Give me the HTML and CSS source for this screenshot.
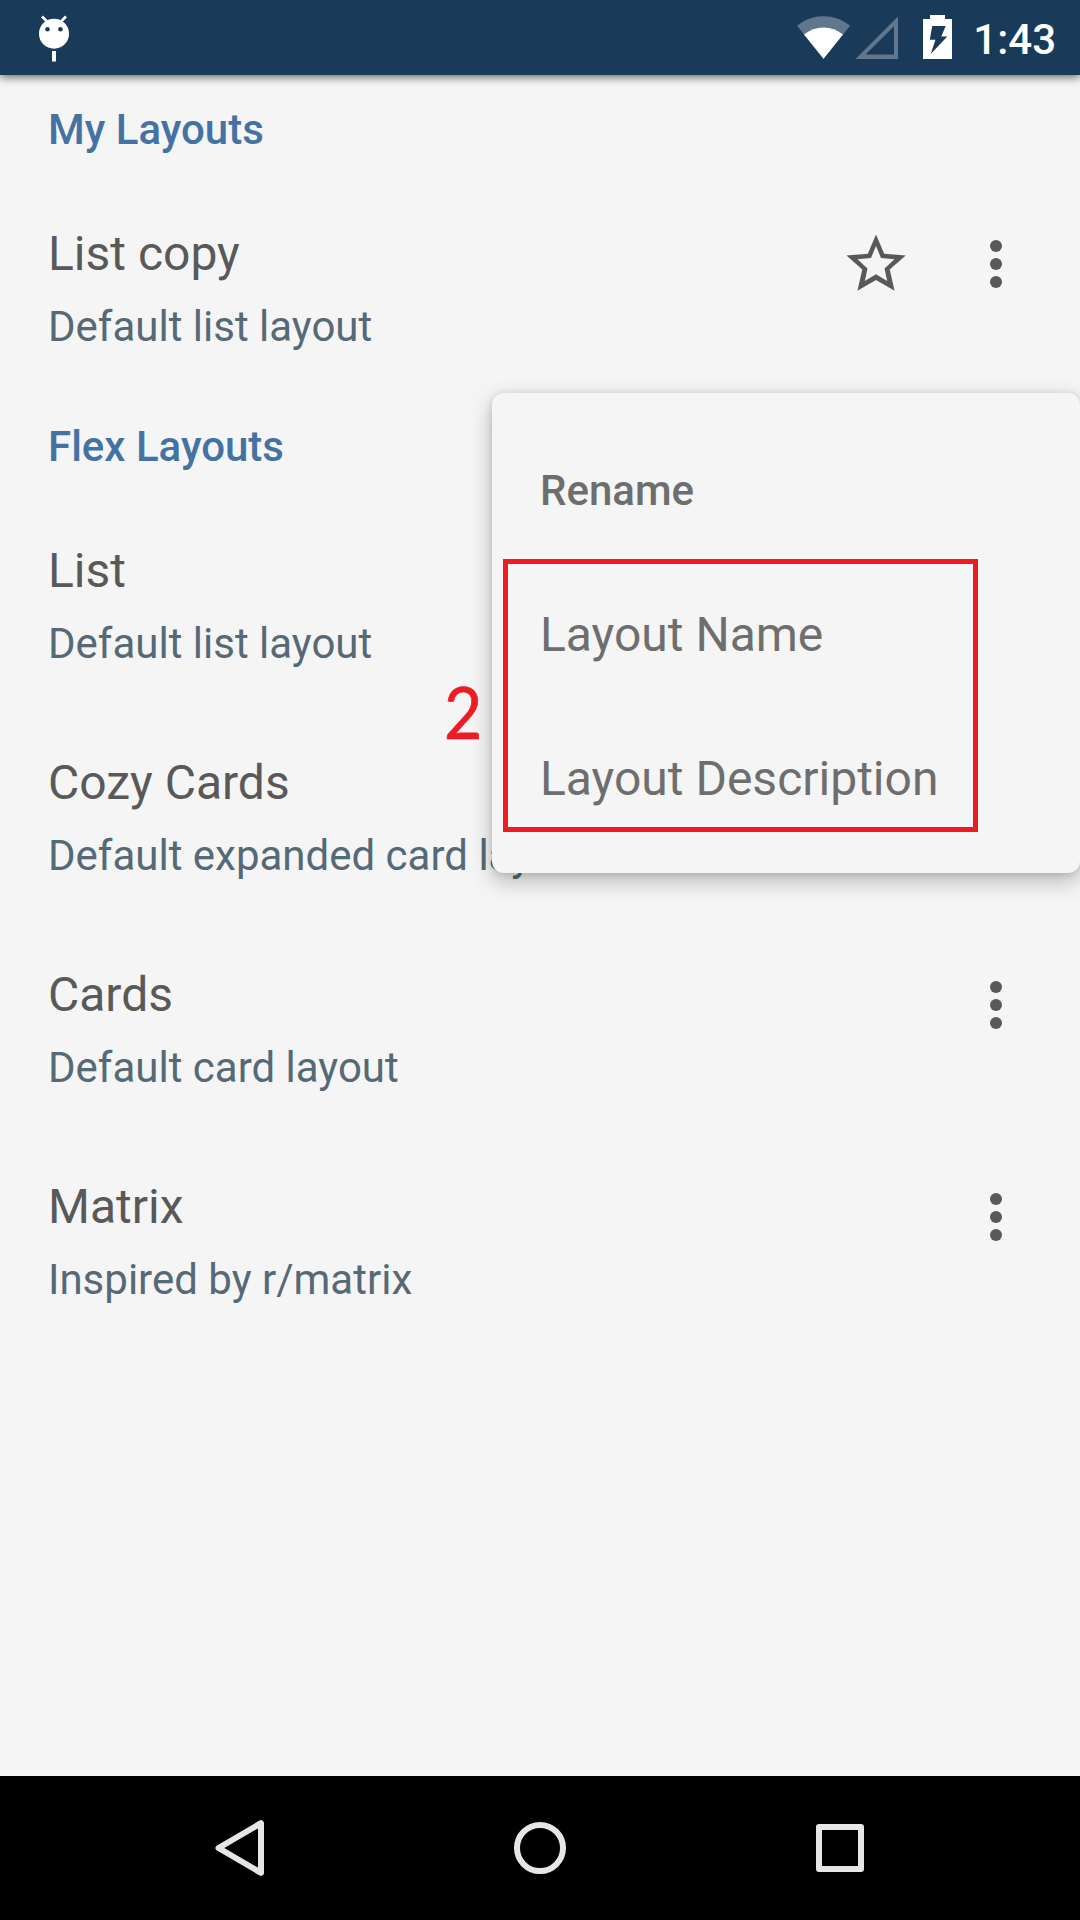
FILE: index.html
```html
<!DOCTYPE html>
<html lang="en">
<head>
<meta charset="utf-8">
<title>Layouts</title>
<link rel="stylesheet" href="styles.css">
</head>
<body>
<div class="screen">
  <header class="status-bar">
    <svg class="status-notice" width="40" height="75" viewBox="34 0 40 75">
      <circle cx="54" cy="33.7" r="15" fill="#fff"/>
      <path d="M42 16.5l5 5M66 16.5l-5 5" stroke="#fff" stroke-width="2.6"/>
      <circle class="eye" cx="47.5" cy="29.3" r="2.3"/><circle class="eye" cx="60.4" cy="29.3" r="2.3"/>
      <path d="M52 51h4v10.5h-4z" fill="#fff"/>
    </svg>
    <div class="status-right">
      <svg width="158" height="75" viewBox="796 0 158 75">
        <path d="M823.5 58.8L797 25.8C804.5 19.5 813.500 16.200 823.500 16.200S842.500 19.500 850 25.800Z" fill="#fff" opacity=".31"/>
        <path d="M823.500 58.800L804 34.500C810 30 816.500 27.500 823.500 27.500S837 30 843 34.500Z" fill="#fff"/>
        <path d="M855.500 59L898 16.500V59ZM865.500 54.500H894V26.300Z" fill="#fff" fill-rule="evenodd" opacity=".31"/>
        <path fill="#fff" fill-rule="evenodd" d="M930 15h15v4h7v40h-29V19h7ZM932.200 26L929.800 39.700H935.500L930.700 54L947.300 36.400H941.300L945.700 26Z"/>
      </svg>
      <span class="clock">1:43</span>
    </div>
  </header>

  <main class="content">
    <h2 class="section-title">My Layouts</h2>
    <div class="row">
      <div class="row-text"><div class="name">List copy</div><div class="desc">Default list layout</div></div>
      <div class="row-actions">
        <svg width="60" height="58" viewBox="26 25 60 58"><path fill="#595959" fill-rule="evenodd" d="M56 24.500L64.200 43.700L85.700 45.600L69.700 59.600L74.600 80.700L56 70L37.400 80.700L42.300 59.600L26.500 45.600L47.800 43.700ZM56 36L51 48L37.500 49.200L47.500 58.400L44.800 71L56 64.300L67.200 71L64.500 58.400L74.500 49.200L61 48Z"/></svg>
        <svg class="more" width="12" height="48" viewBox="0 0 12 48"><circle cx="6" cy="6" r="6"/><circle cx="6" cy="24" r="6"/><circle cx="6" cy="42" r="6"/></svg>
      </div>
    </div>
    <h2 class="section-title">Flex Layouts</h2>
    <div class="row">
      <div class="row-text"><div class="name">List</div><div class="desc">Default list layout</div></div>
    </div>
    <div class="row">
      <div class="row-text"><div class="name">Cozy Cards</div><div class="desc">Default expanded card layout</div></div>
    </div>
    <div class="row">
      <div class="row-text"><div class="name">Cards</div><div class="desc">Default card layout</div></div>
      <div class="row-actions">
        <svg class="more" width="12" height="48" viewBox="0 0 12 48"><circle cx="6" cy="6" r="6"/><circle cx="6" cy="24" r="6"/><circle cx="6" cy="42" r="6"/></svg>
      </div>
    </div>
    <div class="row">
      <div class="row-text"><div class="name">Matrix</div><div class="desc">Inspired by r/matrix</div></div>
      <div class="row-actions">
        <svg class="more" width="12" height="48" viewBox="0 0 12 48"><circle cx="6" cy="6" r="6"/><circle cx="6" cy="24" r="6"/><circle cx="6" cy="42" r="6"/></svg>
      </div>
    </div>
  </main>

  <nav class="nav-bar">
    <svg width="60" height="60" viewBox="0 0 60 60"><path d="M8.500 30L51 5.200V54.800Z"/></svg>
    <svg width="60" height="60" viewBox="0 0 60 60"><circle cx="30" cy="30" r="23"/></svg>
    <svg width="60" height="60" viewBox="0 0 60 60"><path d="M9 9H51V51H9Z"/></svg>
  </nav>

  <div class="popup">
    <div class="popup-title">Rename</div>
    <div class="popup-item">Layout Name</div>
    <div class="popup-item">Layout Description</div>
  </div>
  <div class="callout-box"></div>
  <div class="callout-number">2</div>
</div>
</body>
</html>
```
FILE: styles.css
```css
* { box-sizing: border-box; }
body {
  margin: 0;
  background: #f5f5f5;
  font-family: Roboto, "Liberation Sans", sans-serif;
}
svg { display: block; flex: none; }

.screen {
  position: relative;
  display: flex;
  flex-direction: column;
  width: 1080px;
  height: 1920px;
  overflow: hidden;
}

.status-bar {
  display: flex;
  justify-content: space-between;
  height: 75px;
  padding: 0 24px 0 34px;
  background: #1a3a5a;
  box-shadow: 0 2px 9px rgba(0, 0, 0, .62);
}
.eye { fill: #1a3a5a; }
.status-right { display: flex; gap: 19px; }
.clock {
  color: #fff;
  font-size: 42px;
  font-weight: 500;
  line-height: 80px;
}

.content { flex: 1; padding-top: 5px; }
.section-title {
  margin: 0;
  padding: 0 48px 5px;
  color: #4473a3;
  font-size: 42px;
  font-weight: 500;
  line-height: 100px;
}
.row {
  display: flex;
  justify-content: space-between;
  height: 212px;
  padding: 32px 78px 0 48px;
}
.name { color: #595959; font-size: 48px; line-height: 74px; }
.desc { color: #566976; font-size: 42px; line-height: 72px; }
.row-actions {
  display: flex;
  align-items: center;
  gap: 84px;
  height: 94px;
}
.more { fill: #595959; }

.nav-bar {
  display: flex;
  align-items: center;
  justify-content: center;
  gap: 240px;
  height: 144px;
  background: #000;
}
.nav-bar svg {
  fill: none;
  stroke: #e6e6e6;
  stroke-width: 6;
  stroke-linejoin: round;
}

.popup {
  position: absolute;
  left: 492px;
  top: 393px;
  width: 588px;
  height: 480px;
  padding: 26px 48px 0;
  border-radius: 12px;
  background: #f5f5f5;
  box-shadow: 0 8px 22px rgba(0, 0, 0, .26), 0 1px 7px rgba(0, 0, 0, .12);
  color: #6e6e6e;
}
.popup-title { font-size: 42px; font-weight: 500; line-height: 144px; }
.popup-item { font-size: 48px; line-height: 144px; }

.callout-box {
  position: absolute;
  left: 503px;
  top: 559px;
  width: 475px;
  height: 273px;
  border: 5px solid #ed1c24;
}
.callout-number {
  position: absolute;
  left: 444px;
  top: 668px;
  color: #ed1c24;
  font: 400 71px/88px Lato, sans-serif;
  -webkit-text-stroke: .7px #ed1c24;
  transform: scaleX(.93);
  transform-origin: left;
}
```
